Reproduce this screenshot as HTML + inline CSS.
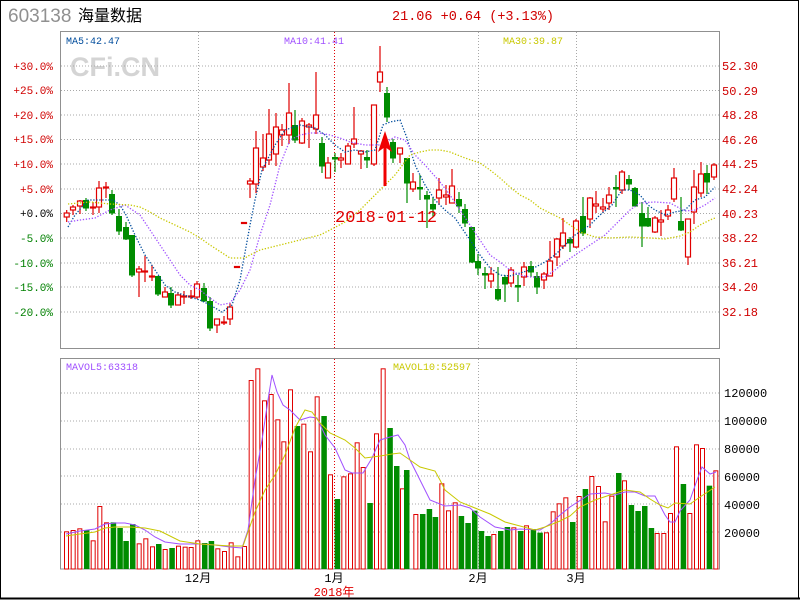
<!DOCTYPE html>
<html><head><meta charset="utf-8"><style>
body{margin:0;background:#fff}
#w{position:relative;width:800px;height:600px;overflow:hidden;background:#fff}
svg{position:absolute;left:0;top:0}
text{font-family:"Liberation Mono",monospace}
</style></head><body><div id="w">
<svg id="s" width="800" height="600" viewBox="0 0 800 600">
<rect x="0.5" y="0.5" width="798" height="597.5" fill="none" stroke="#000" stroke-width="1"/>
<line x1="0" y1="598.5" x2="800" y2="598.5" stroke="#000" stroke-width="2"/>
<text x="8" y="22" font-family="Liberation Sans,sans-serif" style="font-family:'Liberation Sans',sans-serif" font-size="19" fill="#909090">603138</text>
<text x="78" y="21" style="font-family:'Liberation Sans','Noto Sans CJK SC',sans-serif" font-size="16" fill="#000">海量数据</text>
<text x="392" y="20" font-size="13.5" fill="#d00000">21.06 +0.64 (+3.13%)</text>
<text x="70" y="76" style="font-family:'Liberation Sans',sans-serif;font-weight:bold" font-size="27" fill="#d4d4d4">CFi.CN</text>
<g id="grid" stroke="#a8a8a8" stroke-dasharray="1,2" stroke-width="1"></g>
<rect x="60.5" y="31.5" width="659" height="317" fill="none" stroke="#909090"/>
<rect x="60.5" y="358.5" width="659" height="210.5" fill="none" stroke="#909090"/>
<line x1="334.5" y1="32" x2="334.5" y2="348" stroke="#e00000" stroke-dasharray="1,2"/>
<line x1="334.5" y1="359" x2="334.5" y2="568" stroke="#e00000" stroke-dasharray="1,2"/>
<text x="66" y="44" font-size="10" fill="#004c9c">MA5:42.47</text>
<text x="284" y="44" font-size="10" fill="#a050ff">MA10:41.41</text>
<text x="503" y="44" font-size="10" fill="#c8c800">MA30:39.87</text>
<text x="66" y="370" font-size="10" fill="#a050ff">MAVOL5:63318</text>
<text x="393" y="370" font-size="10" fill="#c8c800">MAVOL10:52597</text>
<g font-size="11" fill="#d00000" text-anchor="end">
<text x="53" y="70">+30.0%</text><text x="53" y="94">+25.0%</text><text x="53" y="119">+20.0%</text><text x="53" y="143">+15.0%</text><text x="53" y="168">+10.0%</text><text x="53" y="193">+5.0%</text>
<text x="53" y="217" fill="#000">+0.0%</text>
<g fill="#008000"><text x="53" y="242">-5.0%</text><text x="53" y="267">-10.0%</text><text x="53" y="291">-15.0%</text><text x="53" y="316">-20.0%</text></g>
</g>
<g font-size="12" fill="#d00000">
<text x="722" y="70">52.30</text><text x="722" y="95">50.29</text><text x="722" y="119">48.28</text><text x="722" y="144">46.26</text><text x="722" y="168">44.25</text><text x="722" y="193">42.24</text><text x="722" y="218">40.23</text><text x="722" y="242">38.22</text><text x="722" y="267">36.21</text><text x="722" y="291">34.20</text><text x="722" y="316">32.18</text>
</g>
<g font-size="12" fill="#000" style="font-family:'Liberation Sans',sans-serif">
<text x="724" y="397">120000</text><text x="724" y="425">100000</text><text x="724" y="453">80000</text><text x="724" y="481">60000</text><text x="724" y="509">40000</text><text x="724" y="537">20000</text>
</g>
<g font-size="12" style="font-family:'Liberation Sans','Noto Sans CJK SC',sans-serif" text-anchor="middle">
<text x="198" y="582">12月</text><text x="334" y="582">1月</text><text x="478" y="582">2月</text><text x="576" y="582">3月</text>
<text x="334" y="596" fill="#e00000">2018年</text>
</g>
<g id="vol"></g>
<g id="cdl"></g>
<g id="lines" fill="none"></g>
<text x="335" y="222" font-size="17" fill="#e00000">2018-01-12</text>
<line x1="385" y1="186" x2="385" y2="145" stroke="#f00000" stroke-width="3"/>
<polygon points="385,131 378,152 385,147 392,152" fill="#f00000"/>
</svg>
<script>
var NS="http://www.w3.org/2000/svg";
function el(p,t,a){var e=document.createElementNS(NS,t);for(var k in a)e.setAttribute(k,a[k]);document.getElementById(p).appendChild(e);return e;}
// grid
[66,90.5,115,139.5,164,189,213.5,238,263,287,312].forEach(function(y){el('grid','line',{x1:61,x2:719,y1:y,y2:y});});
[393,421,449,476,504,532].forEach(function(y){el('grid','line',{x1:61,x2:719,y1:y,y2:y});});
[198.5,478.5,576.5].forEach(function(x){el('grid','line',{x1:x,x2:x,y1:32,y2:348});el('grid','line',{x1:x,x2:x,y1:359,y2:568});});
var R="#e00000",G="#008c00";
// volume
var v3="192r604 212r600 232r595 252g600 272r631 292r528 312r577 332g577 352g594 370g633 390g582 410r640 430r625 450r649 468g642 488r657 508g654 528r647 548r650 566r651 586r631 606g639 626g633 646r655 666r663 686r637 706r679 726r648 746r150 766r115 786r211 806r192 826r268 844r334 864r178 884g288 904r281 924r364 944r199 964g258 984r433 1004g507 1024r439 1044r430 1064r337 1082r411 1102g519 1122r310 1142r115 1162g294 1182g408";
var v4="0r475 12g420 40r552 60g552 80g537 98g561 118r460 138r541 158r517 176g558 196g579 216g542 236g603 256g618 274r612 294g603 314g591 334r592 354g603 372r586 392g597 412g608 432r607 452r544 470r520 490r502 510g576 530r498 548g477 568r438 588r468 608r574 628r497 648g429 666r451 686g525 706g543 726g528 746g594 764r609 784r609 804r549 822r349 842g462 862r549 882r343 900r354 920g467 940r421";
function vb(s,off){s.split(" ").forEach(function(t){var m=t.match(/(\d+)([rg])(\d+)/);var x=off+(+m[1])/3,y=330+(+m[3])/3;
if(m[2]=='r')el('vol','rect',{x:x+0.5,y:y+0.5,width:4,height:568.5-y,fill:"#fff",stroke:R,"stroke-width":1});
else el('vol','rect',{x:x,y:y,width:5.5,height:569-y,fill:G});});}
vb(v3,0);vb(v4,400);
// candles: x,hi,lo,bt,bb,c
var C=[[66.7,210,222,213,217,'r'],[73,205,215,207,210,'r'],[80,200,214,201,206,'r'],[86,198,211,200,208,'g'],[93,202,215,207,208,'r'],[99,181,213,188,207,'r'],[106,182,198,187,188,'r'],[112,190,215,194,213,'g'],[119,209,235,216,231,'g'],[126,222,240,227,239,'g'],[132,235,277,235,275,'g'],[139,266,297,269,272,'r'],[145,256,282,271,272,'r'],[152,265,281,276,277,'r'],[158,276,296,276,294,'g'],[165,287,297,292,297,'r'],[171,287,308,293,305,'g'],[178,292,305,295,305,'r'],[184,291,304,296,297,'r'],[191,290,299,296,297,'r'],[197,281,299,284,297,'r'],[204,283,302,288,301,'g'],[210,297,331,301,328,'g'],[217,319,333,319,325,'r'],[224,316,325,322,323,'r'],[230,303,325,307,319,'r'],[237,267,267,266.5,267.5,'r'],[244,223,223,222.5,223.5,'r'],
[250,178,198,181,184,'r'],[256,131,193,148,184,'r'],[263,134,171,158,167,'r'],[269,109,165,134,160,'r'],[276,113,166,127,154,'r'],[282,124,146,130,135,'r'],[289,83,144,113,135,'r'],[295,110,143,125,140,'g'],[302,118,144,121,143,'r'],[309,123,148,125,127,'r'],[316,72,134,115,129,'r'],[322,137,173,143,166,'g'],[328,157,178,163,178,'r'],[335,153,172,157,159,'g'],[341,153,168,158,160,'r'],[348,143,164,146,164,'r'],[354,107,148,139,144,'r'],[361,150,169,151,154,'r'],[367,150,168,157,160,'g'],[374,105,166,105,164,'r'],[380,46,92,72,82,'r'],[387,87,122,93,117,'g'],[393,139,163,142,158,'g'],[400,148,163,148,154,'r'],[407,158,203,158,183,'g'],[413,173,192,182,189,'r'],
[420,175,200,187,189,'g'],[427,191,228,195,199,'g'],[433,197,217,204,209,'g'],[439,178,205,190,198,'r'],[446,185,205,195,197,'r'],[452,169,203,186,203,'r'],[459,192,213,199,206,'g'],[465,204,227,209,223,'g'],[472,227,263,227,262,'g'],[478,254,275,261,268,'g'],[485,267,289,273,275,'g'],[491,267,288,274,281,'r'],[498,267,301,289,299,'g'],[505,275,302,277,284,'g'],[511,267,287,270,283,'r'],[518,275,302,285,287,'g'],[524,262,286,267,277,'r'],[531,261,277,266,272,'g'],[537,272,294,276,287,'g'],[544,272,289,274,280,'r'],[550,241,276,261,276,'r'],[557,238,266,239,257,'r'],
[563,218,249,233,246,'r'],[570,237,252,239,243,'g'],[576,219,248,221,247,'r'],[583,197,236,216,233,'g'],[590,197,228,198,219,'r'],[596,191,213,204,206,'r'],[603,198,213,207,209,'r'],[609,187,210,195,203,'r'],[616,175,207,187,189,'g'],[622,170,194,172,190,'r'],[629,175,190,179,184,'g'],[635,187,207,188,206,'g'],[642,202,247,213,226,'g'],[648,207,227,218,226,'g'],[655,216,233,218,232,'r'],[661,210,236,220,222,'r'],[668,205,220,210,216,'r'],[674,168,202,178,199,'r'],[681,197,231,221,230,'g'],[688,219,265,219,257,'r'],[694,170,224,187,212,'r'],[701,162,197,174,193,'r'],[707,165,194,173,182,'g'],[714,163,180,165,177,'r']];
C.forEach(function(c){var x=c[0],col=c[5]=='r'?R:G;
el('cdl','line',{x1:x,x2:x,y1:c[1],y2:c[2],stroke:col,"stroke-width":1.2});
var h=Math.max(c[4]-c[3],1);
if(c[5]=='r')el('cdl','rect',{x:x-2.5,y:c[3],width:5,height:h,fill:"#fff",stroke:col,"stroke-width":1.2});
else el('cdl','rect',{x:x-3,y:c[3],width:6,height:h+0.5,fill:col});});
function pl(pts,col,dash){el('lines','polyline',{points:pts,stroke:col,"stroke-width":dash?1.3:1,"stroke-dasharray":dash?"1.3,1.7":"none"});}
pl("68,227 75,215 88,200 100,200 113,200 120,205 126,215 135,235 145,255 155,270 165,285 175,292 190,297 200,300 210,305 222,312 232,305 240,280 250,225 255,200 262,170 275,145 285,130 300,125 315,128 325,135 335,145 345,152 355,150 365,152 375,150 383,125 390,122 400,120 407,138 415,165 425,185 435,200 445,210 455,218 470,240 480,255 490,268 500,275 510,276 520,273 530,270 545,262 555,255 565,245 575,235 590,225 600,215 612,205 622,190 630,190 640,195 648,205 655,210 665,215 675,212 685,210 695,200 705,197 715,187","#004c9c",1);
pl("68,222 80,220 95,218 110,210 125,205 140,215 150,230 160,245 170,260 180,275 190,285 200,290 210,298 220,305 230,303 240,290 250,270 260,235 270,205 280,165 290,140 300,135 310,133 320,133 330,135 340,138 350,142 365,145 380,145 395,137 405,140 415,155 425,165 440,182 450,195 460,210 470,225 480,240 490,255 500,262 510,270 520,275 530,277 545,277 555,270 565,262 575,255 590,245 605,235 620,220 630,210 640,203 655,202 670,203 685,211 695,210 705,205 715,198","#a050ff",1);
pl("68,204 90,202 110,204 130,205 140,207 150,212 160,218 175,225 190,232 200,238 210,245 230,258 245,258 250,255 260,250 280,245 300,240 320,235 330,230 345,222 360,210 375,195 385,185 395,175 410,155 420,152 430,150 440,150 450,152 465,158 480,163 490,170 500,178 510,187 520,195 530,200 540,208 550,213 560,218 570,225 580,232 595,237 610,238 630,237 650,238 665,239 680,236 690,232 700,225 710,220 715,218","#c8c800",1);
pl("66,534 80,531 95,529 105,524 115,523 125,523 135,525 145,530 155,537 165,542 180,544 200,544 215,545 230,547 242,548 248,530 255,480 262,440 268,400 272,375 277,392 283,405 290,410 300,420 310,417 317,418 325,435 335,448 345,470 352,473 363,473 372,458 380,440 390,437 398,435 405,445 410,460 420,480 430,500 445,506 460,505 470,508 480,517 495,527 510,530 520,529 540,530 550,524 560,515 570,507 590,494 605,493 615,495 625,492 635,492 645,496 655,496 665,515 670,522 675,522 680,511 690,500 697,480 702,467 710,474 716,472","#a050ff",0);
pl("66,536 80,534 95,532 105,528 115,527 130,527 145,528 160,531 180,541 200,544 230,546 243,546 255,512 265,490 275,475 285,455 295,428 305,410 312,412 320,423 330,433 345,440 355,448 365,458 380,456 392,454 400,453 410,460 420,467 435,471 440,480 445,490 460,502 475,508 490,514 505,522 520,526 535,530 545,527 560,521 570,516 580,507 595,500 610,495 625,490 640,492 650,499 660,505 668,508 675,503 690,504 700,497 715,487","#c8c800",0);
</script>
</div></body></html>
